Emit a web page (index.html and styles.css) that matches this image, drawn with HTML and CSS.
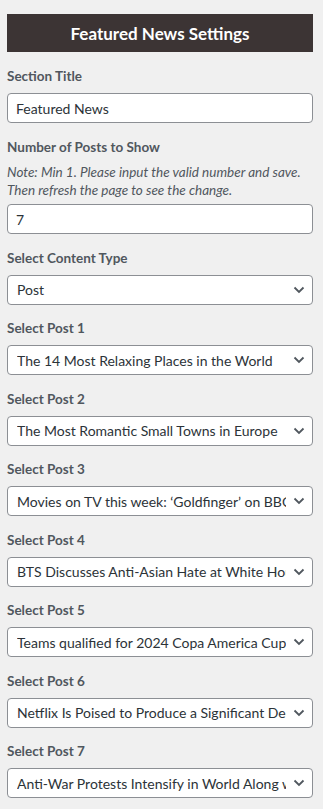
FILE: index.html
```html
<!DOCTYPE html>
<html lang="en">
<head>
  <meta charset="UTF-8" />
  <meta name="viewport" content="width=device-width, initial-scale=1.0"/>
  <title>Featured News Settings</title>
  <link rel="stylesheet" href="styles.css">
</head>
<body>

  <div class="panel">
    <h2 class="panel-title">Featured News Settings</h2>

    <div class="field">
      <label for="sectionTitle">Section Title</label>
      <input type="text" id="sectionTitle" value="Featured News">
    </div>

    <div class="field">
      <label for="postCount">Number of Posts to Show</label>
      <p class="note">Note: Min 1. Please input the valid number and save. Then refresh the page to see the change.</p>
      <input type="text" id="postCount" value="7">
    </div>

    <div class="field">
      <label for="contentType">Select Content Type</label>
      <div class="select-wrap">
        <select id="contentType">
          <option>Post</option>
        </select>
        <svg class="chevron" width="12" height="8" viewBox="0 0 12 8"><path d="M1.5 1.5 L6 6 L10.5 1.5" fill="none" stroke="#50575e" stroke-width="1.8"/></svg>
      </div>
    </div>

    <div class="field">
      <label for="post1">Select Post 1</label>
      <div class="select-wrap">
        <select id="post1"><option>The 14 Most Relaxing Places in the World</option></select>
        <svg class="chevron" width="12" height="8" viewBox="0 0 12 8"><path d="M1.5 1.5 L6 6 L10.5 1.5" fill="none" stroke="#50575e" stroke-width="1.8"/></svg>
      </div>
    </div>

    <div class="field">
      <label for="post2">Select Post 2</label>
      <div class="select-wrap">
        <select id="post2"><option>The Most Romantic Small Towns in Europe</option></select>
        <svg class="chevron" width="12" height="8" viewBox="0 0 12 8"><path d="M1.5 1.5 L6 6 L10.5 1.5" fill="none" stroke="#50575e" stroke-width="1.8"/></svg>
      </div>
    </div>

    <div class="field">
      <label for="post3">Select Post 3</label>
      <div class="select-wrap">
        <select id="post3"><option>Movies on TV this week: ‘Goldfinger’ on BBC America and more</option></select>
        <svg class="chevron" width="12" height="8" viewBox="0 0 12 8"><path d="M1.5 1.5 L6 6 L10.5 1.5" fill="none" stroke="#50575e" stroke-width="1.8"/></svg>
      </div>
    </div>

    <div class="field">
      <label for="post4">Select Post 4</label>
      <div class="select-wrap">
        <select id="post4"><option>BTS Discusses Anti-Asian Hate at White House</option></select>
        <svg class="chevron" width="12" height="8" viewBox="0 0 12 8"><path d="M1.5 1.5 L6 6 L10.5 1.5" fill="none" stroke="#50575e" stroke-width="1.8"/></svg>
      </div>
    </div>

    <div class="field">
      <label for="post5">Select Post 5</label>
      <div class="select-wrap">
        <select id="post5"><option>Teams qualified for 2024 Copa America Cup</option></select>
        <svg class="chevron" width="12" height="8" viewBox="0 0 12 8"><path d="M1.5 1.5 L6 6 L10.5 1.5" fill="none" stroke="#50575e" stroke-width="1.8"/></svg>
      </div>
    </div>

    <div class="field">
      <label for="post6">Select Post 6</label>
      <div class="select-wrap">
        <select id="post6"><option>Netflix Is Poised to Produce a Significant Decline</option></select>
        <svg class="chevron" width="12" height="8" viewBox="0 0 12 8"><path d="M1.5 1.5 L6 6 L10.5 1.5" fill="none" stroke="#50575e" stroke-width="1.8"/></svg>
      </div>
    </div>

    <div class="field">
      <label for="post7">Select Post 7</label>
      <div class="select-wrap">
        <select id="post7"><option>Anti-War Protests Intensify in World Along with Russia</option></select>
        <svg class="chevron" width="12" height="8" viewBox="0 0 12 8"><path d="M1.5 1.5 L6 6 L10.5 1.5" fill="none" stroke="#50575e" stroke-width="1.8"/></svg>
      </div>
    </div>
  </div>

</body>
</html>
```

FILE: styles.css
```css
* { box-sizing: border-box; margin: 0; padding: 0; }
body {
  background-color: #f0f0f0;
  color: #2c3338;
  font-family: Lato, "Noto Sans", Arial, sans-serif;
  font-size: 14px;
}

.panel {
  width: 306px;
  margin: 14px 0 0 7px;
}

.panel-title {
  background-color: #3c3434;
  color: #fff;
  font-size: 17px;
  font-weight: 700;
  text-align: center;
  height: 38px;
  line-height: 39px;
  margin-bottom: 15px;
}

.field {
  margin-bottom: 14.5px;
}
.field label {
  display: block;
  font-size: 13.5px;
  font-weight: 700;
  color: #50575e;
  line-height: 18px;
  height: 18px;
  margin-bottom: 8px;
}
.note {
  font-style: italic;
  font-size: 13.5px;
  color: #50575e;
  line-height: 18px;
  margin-top: -0.5px;
  margin-bottom: 5px;
}

input,
select {
  display: block;
  width: 100%;
  height: 30px;
  background-color: #fff;
  border: 1px solid #8c8f94;
  border-radius: 4px;
  color: #2c3338;
  font-family: inherit;
  font-size: 14px;
}
input {
  padding: 0 8px;
}
select {
  appearance: none;
  -webkit-appearance: none;
  padding: 0 26px 0 9px;
  white-space: nowrap;
  overflow: hidden;
  text-overflow: clip;
}

.select-wrap {
  position: relative;
}
.chevron {
  position: absolute;
  right: 8px;
  top: 11px;
  pointer-events: none;
}
```
